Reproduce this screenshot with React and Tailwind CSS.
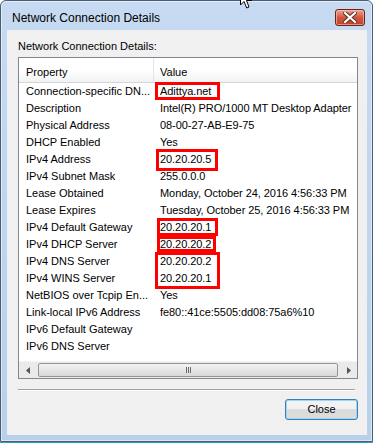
import React from "react";

const rows = [
  ["Connection-specific DN...", "Adittya.net"],
  ["Description", "Intel(R) PRO/1000 MT Desktop Adapter"],
  ["Physical Address", "08-00-27-AB-E9-75"],
  ["DHCP Enabled", "Yes"],
  ["IPv4 Address", "20.20.20.5"],
  ["IPv4 Subnet Mask", "255.0.0.0"],
  ["Lease Obtained", "Monday, October 24, 2016 4:56:33 PM"],
  ["Lease Expires", "Tuesday, October 25, 2016 4:56:33 PM"],
  ["IPv4 Default Gateway", "20.20.20.1"],
  ["IPv4 DHCP Server", "20.20.20.2"],
  ["IPv4 DNS Server", "20.20.20.2"],
  ["IPv4 WINS Server", "20.20.20.1"],
  ["NetBIOS over Tcpip En...", "Yes"],
  ["Link-local IPv6 Address", "fe80::41ce:5505:dd08:75a6%10"],
  ["IPv6 Default Gateway", ""],
  ["IPv6 DNS Server", ""],
];

function CloseX() {
  return (
    <div className="mr-[2px] mt-[8px] w-[30px] h-[17px] rounded-[3px] border border-[#6b2218] bg-gradient-to-b from-[#e8a593] via-[#d2563f] to-[#c0412b] shadow-[inset_0_0_0_1px_rgba(255,200,190,0.6)] flex items-center justify-center">
      <svg width="14" height="11" viewBox="0 0 14 11">
        <path d="M2 1 L12 10 M12 1 L2 10" stroke="#5a2a22" strokeWidth="4" strokeLinecap="square" />
        <path d="M2 1 L12 10 M12 1 L2 10" stroke="#ffffff" strokeWidth="2.2" strokeLinecap="square" />
      </svg>
    </div>
  );
}

function Arrow({ dir }) {
  return (
    <div className="w-[17px] h-[17px] flex items-center justify-center">
      <svg width="4" height="7" viewBox="0 0 4 7">
        {dir === "left" ? (
          <path d="M4 0 L0 3.5 L4 7 Z" fill="#555" />
        ) : (
          <path d="M0 0 L4 3.5 L0 7 Z" fill="#555" />
        )}
      </svg>
    </div>
  );
}

export default function App() {
  return (
    <div
      className="w-[377px] h-[446px] bg-white relative overflow-hidden text-black"
      style={{ fontFamily: '"Liberation Sans", Arial, sans-serif' }}
    >
      <div className="w-[373px] h-[442px] border border-[#4a5d74] rounded-t-[6px] bg-gradient-to-b from-[#c6dbf2] to-[#b8d0ea] flex flex-col pl-[6px] pr-[5px] pb-[6px] shadow-[inset_0_0_0_1px_rgba(255,255,255,0.5)]">
        <div className="h-[29px] flex justify-between shrink-0">
          <div className="pl-[5px] pt-[10px] text-[12px] leading-[14px]">Network Connection Details</div>
          <CloseX />
        </div>
        <div className="flex-1 bg-[#f0f0f0] pl-[11px] pr-[9px] pt-[10px] flex flex-col">
          <div className="text-[11px] leading-[13px]">Network Connection Details:</div>
          <div className="mt-[4px] w-[340px] h-[322px] border border-[#828790] bg-white relative flex flex-col overflow-hidden">
            <div className="h-[25px] shrink-0 flex border-b border-[#d5d5d5] bg-gradient-to-b from-white from-50% to-[#f1f2f4] text-[11px]">
              <div className="w-[135px] pl-[7px] pt-[6px] border-r border-[#e3e4e6]">Property</div>
              <div className="pl-[6px] pt-[6px]">Value</div>
            </div>
            <div className="flex flex-col">
              {rows.map(([k, v], i) => (
                <div key={i} className="h-[17px] flex text-[11px] leading-[17px] whitespace-nowrap">
                  <div className="w-[135px] shrink-0 pl-[7px]">{k}</div>
                  <div className="pl-[6px] tracking-[-0.06px]">{v}</div>
                </div>
              ))}
            </div>
            <div className="mt-auto h-[17px] shrink-0 flex bg-[#eaeaea] border-t border-[#f4f4f4]">
              <Arrow dir="left" />
              <div className="flex-1 px-[2px] py-[1px] flex">
                <div className="flex-1 rounded-[2px] border border-[#959595] bg-gradient-to-b from-[#f3f3f3] to-[#d8d8d8] flex items-center justify-center">
                  <div className="flex gap-[1px]">
                    <div className="w-[1px] h-[6px] bg-[#6a6a6a]" />
                    <div className="w-[1px] h-[6px] bg-[#6a6a6a]" />
                    <div className="w-[1px] h-[6px] bg-[#6a6a6a]" />
                  </div>
                </div>
              </div>
              <Arrow dir="right" />
            </div>
            <div className="absolute left-[136px] top-[24px] w-[65px] h-[18px] border-[3px] border-[#ff0000]" />
            <div className="absolute left-[137px] top-[91px] w-[62px] h-[22px] border-[3px] border-[#ff0000]" />
            <div className="absolute left-[138px] top-[160px] w-[61px] h-[18px] border-[3px] border-[#ff0000]" />
            <div className="absolute left-[138px] top-[178px] w-[59px] h-[16px] border-[3px] border-[#ff0000]" />
            <div className="absolute left-[136px] top-[194px] w-[65px] h-[37px] border-[3px] border-[#ff0000]" />
          </div>
          <div className="mt-[10px] w-[337px] h-[2px] border-t border-[#a0a0a0] border-b border-b-white" />
          <div className="mt-[8px] self-end w-[73px] h-[21px] rounded-[3px] border border-[#3c7fb1] shadow-[inset_0_0_0_1px_#9fd6f6] bg-gradient-to-b from-[#f2f2f2] from-50% to-[#dcdcdc] to-50% flex items-center justify-center text-[11px]">
            Close
          </div>
        </div>
      </div>
      <div className="w-[373px] h-[1px] bg-[#2aa3b3]" />
      <svg className="absolute left-[240px] top-[-11px]" width="13" height="21" viewBox="0 0 13 21">
        <path d="M0.5 0.5 L0.5 16 L4 12.5 L6.7 19 L9 18 L6.5 11.5 L11.5 11.5 Z" fill="white" stroke="black" strokeWidth="1" />
      </svg>
    </div>
  );
}
